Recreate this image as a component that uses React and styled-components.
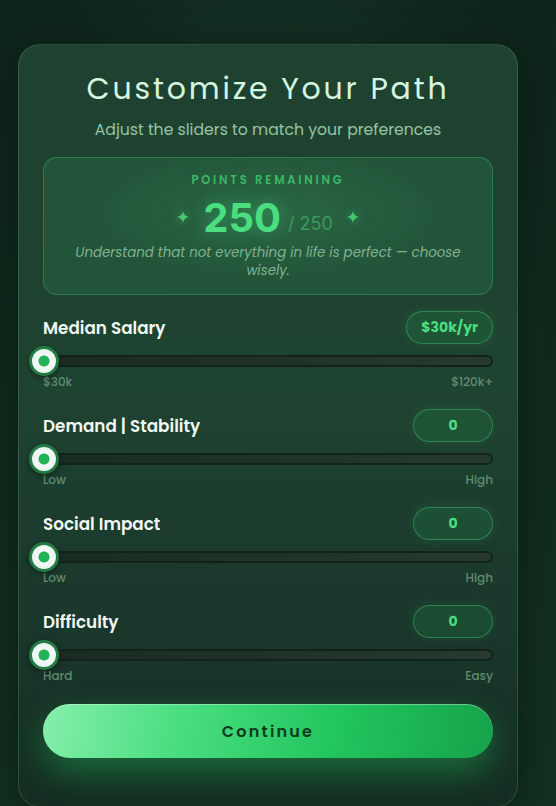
import React from 'react';
import styled, { createGlobalStyle } from 'styled-components';

const sliders = [
  { title: 'Median Salary', badge: '$30k/yr', value: 0, min: '$30k', max: '$120k+' },
  { title: 'Demand | Stability', badge: '0', value: 0, min: 'Low', max: 'High' },
  { title: 'Social Impact', badge: '0', value: 0, min: 'Low', max: 'High' },
  { title: 'Difficulty', badge: '0', value: 0, min: 'Hard', max: 'Easy' },
];

function Sparkle() {
  return (
    <SparkleIcon viewBox="0 0 24 24">
      <path d="M12 1 C13 8 16 11 23 12 C16 13 13 16 12 23 C11 16 8 13 1 12 C8 11 11 8 12 1 Z" />
    </SparkleIcon>
  );
}

export default function App() {
  return (
    <>
      <GlobalStyle />
      <Page>
        <Card>
          <Title>Customize Your Path</Title>
          <Subtitle>Adjust the sliders to match your preferences</Subtitle>
          <PointsBox>
            <PointsLabel>POINTS REMAINING</PointsLabel>
            <PointsRow>
              <Sparkle />
              <PointsValue>250</PointsValue>
              <PointsTotal>/ 250</PointsTotal>
              <Sparkle />
            </PointsRow>
            <Hint>Understand that not everything in life is perfect — choose wisely.</Hint>
          </PointsBox>
          <Sliders>
            {sliders.map(({ title, badge, value, min, max }) => (
              <Section key={title}>
                <LabelRow>
                  <SliderTitle>{title}</SliderTitle>
                  <Badge>{badge}</Badge>
                </LabelRow>
                <Track>
                  <Thumb style={{ left: `${value}%` }} />
                </Track>
                <RangeRow>
                  <span>{min}</span>
                  <span>{max}</span>
                </RangeRow>
              </Section>
            ))}
          </Sliders>
          <ContinueButton>Continue</ContinueButton>
        </Card>
      </Page>
    </>
  );
}

const GlobalStyle = createGlobalStyle`
  html, body {
    margin: 0;
    padding: 0;
    background: #0f281d;
    font-family: "Poppins", "Open Sans", "Noto Sans", sans-serif;
  }
  * { box-sizing: border-box; }
`;

const Page = styled.div`
  width: 556px;
  height: 806px;
  overflow: hidden;
  padding: 44px 0 0 18px;
  background:
    radial-gradient(ellipse at 50% 40%, #183a2a 0%, rgba(15,40,29,0) 70%),
    linear-gradient(180deg, #0e251b 0%, #12301f 100%);
`;

const Card = styled.div`
  width: 500px;
  height: 763px;
  padding: 26px 24px 0 24px;
  border-radius: 22px;
  border: 1px solid rgba(120, 200, 150, 0.22);
  background: linear-gradient(180deg, #1f4230 0%, #1f4331 45%, #19362a 80%, #142c21 100%);
  box-shadow: 0 10px 40px rgba(0, 0, 0, 0.35);
  display: flex;
  flex-direction: column;
`;

const Title = styled.h1`
  margin: 0;
  text-align: center;
  font-size: 30px;
  line-height: 36px;
  font-weight: 400;
  letter-spacing: 2.8px;
  color: #d6f5e0;
`;

const Subtitle = styled.p`
  margin: 13px 0 0;
  text-align: center;
  font-size: 15.7px;
  line-height: 20px;
  color: #96c3a4;
`;

const PointsBox = styled.div`
  margin-top: 17px;
  padding: 15px 20px 14px;
  border-radius: 14px;
  border: 1px solid rgba(74, 222, 128, 0.28);
  background: radial-gradient(ellipse at 50% 40%, rgba(60, 150, 95, 0.35) 0%, rgba(40, 110, 70, 0.2) 60%),
    rgba(36, 90, 60, 0.45);
  display: flex;
  flex-direction: column;
  align-items: center;
`;

const PointsLabel = styled.div`
  font-size: 11.5px;
  line-height: 14px;
  font-weight: 600;
  letter-spacing: 2.8px;
  color: #3bb866;
`;

const PointsRow = styled.div`
  margin-top: 8px;
  height: 44px;
  display: flex;
  align-items: center;
  gap: 7px;
  font-family: "Inter", "Liberation Sans", sans-serif;
`;

const SparkleIcon = styled.svg`
  width: 14px;
  height: 14px;
  fill: #45c872;
  margin: 0 6px;
  filter: drop-shadow(0 0 4px rgba(74, 222, 128, 0.5));
`;

const PointsValue = styled.span`
  font-size: 40px;
  font-weight: 700;
  color: #4ade80;
  text-shadow: 0 0 18px rgba(74, 222, 128, 0.45);
`;

const PointsTotal = styled.span`
  margin-top: 12px;
  font-size: 18px;
  color: #3c9a5d;
`;

const Hint = styled.p`
  margin: 5px 0 0;
  text-align: center;
  font-size: 13.4px;
  line-height: 18px;
  font-style: italic;
  color: #82b290;
`;

const Sliders = styled.div`
  margin-top: 16px;
  display: flex;
  flex-direction: column;
  gap: 20px;
`;

const Section = styled.div`
  display: flex;
  flex-direction: column;
`;

const LabelRow = styled.div`
  height: 33px;
  display: flex;
  align-items: center;
  justify-content: space-between;
`;

const SliderTitle = styled.span`
  font-size: 16.8px;
  font-weight: 600;
  color: #f1f7f3;
`;

const Badge = styled.span`
  min-width: 80px;
  height: 33px;
  padding: 0 14px;
  border-radius: 17px;
  border: 1px solid rgba(74, 222, 128, 0.38);
  background: rgba(34, 197, 94, 0.14);
  color: #4ade80;
  font-size: 14px;
  font-weight: 700;
  display: flex;
  align-items: center;
  justify-content: center;
  box-shadow: 0 0 12px rgba(74, 222, 128, 0.12);
`;

const Track = styled.div`
  position: relative;
  margin-top: 11px;
  height: 12px;
  border-radius: 6px;
  background: linear-gradient(90deg, #1a2b21, #273a2f);
  border: 2px solid #13231a;
`;

const Thumb = styled.div`
  position: absolute;
  top: 50%;
  width: 30px;
  height: 30px;
  margin-left: -16px;
  transform: translateY(-50%);
  border-radius: 50%;
  border: 3px solid #237a45;
  background: radial-gradient(circle, #22b356 0 5px, #f4faf6 6px, #dfeee5 100%);
  box-shadow: 0 2px 6px rgba(0, 0, 0, 0.4);
`;

const RangeRow = styled.div`
  margin-top: 7px;
  display: flex;
  justify-content: space-between;
  font-size: 12px;
  line-height: 15px;
  font-weight: 500;
  color: #5f8c6e;
`;

const ContinueButton = styled.button`
  margin-top: 21px;
  height: 54px;
  border: none;
  border-radius: 27px;
  background: linear-gradient(100deg, #86efac 0%, #4ade80 30%, #22c55e 65%, #16a34a 100%);
  color: #0f3a20;
  font-family: inherit;
  font-size: 16px;
  font-weight: 600;
  letter-spacing: 2.2px;
  box-shadow: 0 14px 34px rgba(34, 197, 94, 0.4), inset 0 1px 0 rgba(255, 255, 255, 0.35);
  cursor: pointer;
`;
